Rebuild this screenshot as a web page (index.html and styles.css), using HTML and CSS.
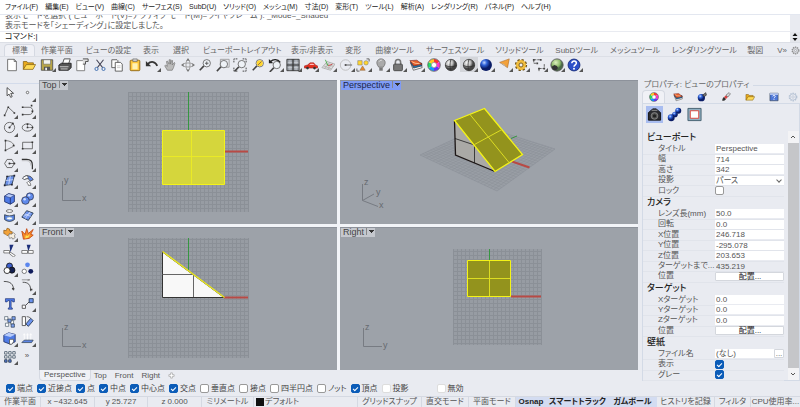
FILE: index.html
```html
<!DOCTYPE html>
<html lang="ja">
<head>
  <meta charset="UTF-8" />
  <title>Rhino</title>
  <link rel="stylesheet" href="styles.css">
</head>
<body>
  <svg class="defs" aria-hidden="true">
    <defs>
      <radialGradient id="blueBall" cx="35%" cy="30%"><stop offset="0" stop-color="#c4d8ff"/><stop offset=".45" stop-color="#2f62d8"/><stop offset="1" stop-color="#0a1c66"/></radialGradient>
      <radialGradient id="grayBall" cx="35%" cy="30%"><stop offset="0" stop-color="#fff"/><stop offset=".6" stop-color="#bbb"/><stop offset="1" stop-color="#444"/></radialGradient>
      <radialGradient id="greenBall" cx="40%" cy="30%"><stop offset="0" stop-color="#dff0c0"/><stop offset=".7" stop-color="#8dba6a"/><stop offset="1" stop-color="#4c6b48"/></radialGradient>
      <pattern id="grid" width="4" height="4" patternUnits="userSpaceOnUse" patternTransform="translate(1 0)"><path d="M0 0H4V4H0z" fill="#979ca3"/><path d="M0 .5H4M.5 0V4" stroke="#8b9097" stroke-width="1" fill="none"/></pattern>
      <symbol id="wheel" viewBox="0 0 16 16">
        <g fill="none" stroke-width="4"><path d="M8 3A5 5 0 0 1 12.3 5.5" stroke="#f33"/><path d="M12.3 5.5A5 5 0 0 1 12.3 10.5" stroke="#f3c"/><path d="M12.3 10.5A5 5 0 0 1 8 13" stroke="#63f"/><path d="M8 13A5 5 0 0 1 3.7 10.5" stroke="#19f"/><path d="M3.7 10.5A5 5 0 0 1 3.7 5.5" stroke="#2d6"/><path d="M3.7 5.5A5 5 0 0 1 8 3" stroke="#fc2"/></g>
        <circle cx="8" cy="8" r="7.2" fill="none" stroke="#444" stroke-width=".8"/><circle cx="8" cy="8" r="3" fill="#fff" stroke="#555" stroke-width=".5"/>
      </symbol>
      <symbol id="layers" viewBox="0 0 16 16">
        <path d="M2 6l3 8 10-3-1-5z" fill="#fff" stroke="#444" stroke-width=".8"/><path d="M1.500 5l4 6.500L14.500 9V6z" fill="#27a" stroke="#223" stroke-width=".7"/><path d="M1 3l4.500 6L15 7 9 2.500z" fill="#e5602c" stroke="#722" stroke-width=".7"/><path d="M3 4l4 2 5 .5" stroke="#ffc9a0" fill="none"/>
      </symbol>
      <symbol id="folder" viewBox="0 0 16 16">
        <path d="M1.500 13V4h4l1 1.500H13V8" fill="#e8a91c" stroke="#7d5a10" stroke-width=".8"/><path d="M1.500 13L5 7.500h10.500L12.500 13z" fill="#ffdb57" stroke="#7d5a10" stroke-width=".8"/>
      </symbol>
      <symbol id="lens" viewBox="0 0 16 16">
        <path d="M6.800 9L2 14" stroke="#444" stroke-width="1.800"/><circle cx="10" cy="6" r="4.200" fill="#eef2f7" stroke="#666"/>
      </symbol>
      <symbol id="gear" viewBox="0 0 16 16">
        <circle cx="8" cy="8" r="6" fill="none" stroke="currentColor" stroke-width="2" stroke-dasharray="2.400 1.400"/><circle cx="8" cy="8" r="4.800" fill="none" stroke="currentColor"/><circle cx="8" cy="8" r="2" fill="none" stroke="currentColor"/>
      </symbol>
    </defs>
  </svg>

  <nav class="menu-bar">
    <button>ファイル(F)</button>
    <button>編集(E)</button>
    <button>ビュー(V)</button>
    <button>曲線(C)</button>
    <button>サーフェス(S)</button>
    <button>SubD(U)</button>
    <button>ソリッド(O)</button>
    <button>メッシュ(M)</button>
    <button>寸法(D)</button>
    <button>変形(T)</button>
    <button>ツール(L)</button>
    <button>解析(A)</button>
    <button>レンダリング(R)</button>
    <button>パネル(P)</button>
    <button>ヘルプ(H)</button>
  </nav>

  <section class="command">
    <div class="history">
      <p>表示モードを選択 ( ビューポート(V)=アクティブ モード(M)=ワイヤフレーム ): _Mode=_Shaded</p>
      <p>表示モードを「シェーディング」に設定しました。</p>
    </div>
    <div class="prompt">
      <label for="cmd">コマンド:</label>
      <input id="cmd" type="text" value="|">
      <button class="spin" aria-label="履歴">
        <svg viewBox="0 0 8 10"><path d="M1.500 4L4 1l2.500 3zM1.500 6L4 9l2.500-3z" fill="#111"/></svg>
      </button>
    </div>
  </section>

  <div class="tab-bar">
    <button class="active">標準</button>
    <button>作業平面</button>
    <button>ビューの設定</button>
    <button>表示</button>
    <button>選択</button>
    <button>ビューポートレイアウト</button>
    <button>表示/非表示</button>
    <button>変形</button>
    <button>曲線ツール</button>
    <button>サーフェスツール</button>
    <button>ソリッドツール</button>
    <button>SubDツール</button>
    <button>メッシュツール</button>
    <button>レンダリングツール</button>
    <button>製図</button>
    <span class="more">V»</span>
    <svg class="tab-gear" viewBox="0 0 16 16"><use href="#gear"/></svg>
  </div>

  <div class="toolbar">
    <button aria-label="新規"><svg viewBox="0 0 16 16"><path d="M3 1.500h7.500L13 4v10.500H3z" fill="#fff" stroke="#666"/><path d="M10.500 1.500V4H13" fill="none" stroke="#666"/></svg></button>
    <button aria-label="開く"><svg viewBox="0 0 16 16"><use href="#folder"/></svg></button>
    <button class="fly" aria-label="保存"><svg viewBox="0 0 16 16"><path d="M1.500 2h13v12h-13z" fill="#b8a548" stroke="#555"/><path d="M4 2h8v5H4z" fill="#f3f3ee" stroke="#666" stroke-width=".6"/><path d="M4.500 10h7v4h-7z" fill="#555"/><path d="M6 11h2v3H6z" fill="#eee"/></svg></button>
    <button aria-label="印刷"><svg viewBox="0 0 16 16"><path d="M5 7l2-6h7l-2 6" fill="#fff" stroke="#444"/><path d="M1 8l3-2h11v5l-3 3H1z" fill="#555" stroke="#222"/><path d="M2 10h10M3 12.500h8" stroke="#ddd"/></svg></button>
    <button aria-label="注釈"><svg viewBox="0 0 16 16"><path d="M2 3h9v11.500H2z" fill="#fff" stroke="#777"/><path d="M9 1h6v3h-3v3H9" fill="#ddd" stroke="#444"/></svg></button>
    <button aria-label="カット"><svg viewBox="0 0 16 16"><path d="M4 2l7 9M12 2L5 11" stroke="#445" stroke-width="1.200"/><circle cx="4" cy="12.500" r="1.800" fill="none" stroke="#36a"/><circle cx="12" cy="12.500" r="1.800" fill="none" stroke="#36a"/></svg></button>
    <button aria-label="コピー"><svg viewBox="0 0 16 16"><path d="M2 2h6l1 1v8H2z" fill="#fff" stroke="#555"/><path d="M6 5h6l2 2v8H6z" fill="#fff" stroke="#555"/><path d="M8 9h4M8 11h4" stroke="#aaa" stroke-width=".7"/></svg></button>
    <button aria-label="貼り付け"><svg viewBox="0 0 16 16"><rect x="2.500" y="2.500" width="11" height="12" rx="1" fill="#ffc83d" stroke="#8a6412"/><path d="M5.500 1h5v3h-5z" fill="#ccc" stroke="#555" stroke-width=".6"/><path d="M5 6h6v7H5z" fill="#fff3b5"/></svg></button>
    <button class="fly" aria-label="元に戻す"><svg viewBox="0 0 16 16"><path d="M3 7c4-4 9-3 11 2" fill="none" stroke="#333" stroke-width="2"/><path d="M1 3.500v6h6z" fill="#333"/></svg></button>
    <button aria-label="パン"><svg viewBox="0 0 16 16"><path d="M5 14L2 9l1-1 2 1.500L4 4l1-.5L7 7V2h1.500v5L10 2.500l1 .5-.5 5L13 5l.5 1L12 11l-1.500 3z" fill="#bbb" stroke="#777" stroke-width=".8"/></svg></button>
    <button aria-label="回転"><svg viewBox="0 0 16 16"><ellipse cx="8" cy="8" rx="6.500" ry="2.300" fill="none" stroke="#999"/><ellipse cx="8" cy="8" rx="2.300" ry="6.500" fill="none" stroke="#999"/><path d="M6 3l2-3 2 3zM6 13l2 3 2-3zM3 6L0 8l3 2zM13 6l3 2-3 2z" fill="#777"/></svg></button>
    <button aria-label="ズーム"><svg viewBox="0 0 16 16"><use href="#lens"/><path d="M8 6h4M10 4v4" stroke="#555"/></svg></button>
    <button aria-label="窓ズーム"><svg viewBox="0 0 16 16"><path d="M5 1.500h10v9H5z" fill="none" stroke="#999"/><use href="#lens" y="1" x="-1"/></svg></button>
    <button aria-label="全体ズーム"><svg viewBox="0 0 16 16"><use href="#lens" y="1"/><path d="M1 5V1h4M11 1h4v4M15 11v4h-4M5 15H1v-4" fill="none" stroke="#333" stroke-dasharray="2 1"/></svg></button>
    <button aria-label="選択ズーム"><svg viewBox="0 0 16 16"><use href="#lens"/><circle cx="10" cy="6" r="3.500" fill="#ffd52e"/><path d="M8 8l4-4" stroke="#864"/></svg></button>
    <button class="fly" aria-label="ズームを戻す"><svg viewBox="0 0 16 16"><use href="#lens" y="2"/><path d="M3 4c3-3 8-3 11 1" fill="none" stroke="#222" stroke-width="1.600"/><path d="M1 1v5h5z" fill="#222"/></svg></button>
    <button class="fly" aria-label="4ビュー"><svg viewBox="0 0 16 16"><path d="M1 1.500h14v13H1z" fill="#9aa0a8" stroke="#333"/><path d="M8 1.500v13M1 8h14" stroke="#333" stroke-width="1.400"/><path d="M4.500 2v5M2 5h5M11.500 2v5M9 5h5M4.500 9v5M2 11h5M11.500 9v5M9 11h5" stroke="#d9dde2" stroke-width=".7"/></svg></button>
    <button class="fly" aria-label="車"><svg viewBox="0 0 16 16"><path d="M.5 9l3.500-1 3-2.500h4L13 8l2.500 1v2.500H.5z" fill="#e2301f" stroke="#911" stroke-width=".6"/><path d="M6 8l1.500-1.500h3L12 8z" fill="#fbb"/><circle cx="4" cy="11.500" r="1.500" fill="#333"/><circle cx="12" cy="11.500" r="1.500" fill="#333"/></svg></button>
    <button class="fly" aria-label="作業平面"><svg viewBox="0 0 16 16"><path d="M1 11L7 4l9 3-5 7z" fill="#ddd" stroke="#999" stroke-width=".7"/><path d="M3 9l9 3.500M5 6.500l9 3M4 12l6-7M7.500 13l6-7" stroke="#999" stroke-width=".6"/><path d="M8 9L5 2" stroke="#4a4"/><path d="M8 9l5-2" stroke="#c44"/></svg></button>
    <button class="fly" aria-label="回転視点"><svg viewBox="0 0 16 16"><circle cx="7.500" cy="8" r="6" fill="none" stroke="#bbb"/><path d="M7 8h8" stroke="#555"/><circle cx="7.500" cy="8" r="1.200" fill="#555"/></svg></button>
    <button class="fly" aria-label="オブジェクト選択"><svg viewBox="0 0 16 16"><path d="M2 3h5v5H2z" fill="#ffd52e" stroke="#777" stroke-width=".6"/><circle cx="11.500" cy="5.500" r="2.500" fill="#ffd52e" stroke="#777" stroke-width=".6"/><path d="M7.500 9l3 5h-6z" fill="#e88a2b" stroke="#864" stroke-width=".6"/><path d="M12 1h3v3M1 12v3h3" fill="none" stroke="#555"/></svg></button>
    <button class="fly" aria-label="電球"><svg viewBox="0 0 16 16"><path d="M5.500 10.500C1 5 4 1 8 1s7 4 2.500 9.500z" fill="#aaa" stroke="#777"/><path d="M6 11h4v3.500H6z" fill="#777"/><path d="M6 4c1-1.500 2-1.500 3-1.500" stroke="#eee" fill="none"/></svg></button>
    <button class="fly" aria-label="ロック"><svg viewBox="0 0 16 16"><path d="M5 8V5c0-4.500 6-4.500 6 0v3" fill="none" stroke="#777" stroke-width="1.800"/><rect x="3" y="7" width="10" height="7.500" rx="1" fill="#777" stroke="#444"/></svg></button>
    <button class="fly" aria-label="レイヤ"><svg viewBox="0 0 16 16"><use href="#layers"/></svg></button>
    <button aria-label="プロパティ"><svg viewBox="0 0 16 16"><use href="#wheel"/></svg></button>
    <button aria-label="シェーディング"><svg viewBox="0 0 16 16"><circle cx="8" cy="8" r="6.500" fill="url(#grayBall)" stroke="#333" stroke-width=".8"/><path d="M1.500 8.500c4 2 9 2 13 0M8 1.500c-1.500 4-1.500 9 0 13" fill="none" stroke="#333" stroke-width=".9"/></svg></button>
    <button class="fly pressed" aria-label="シェーディング表示"><svg viewBox="0 0 16 16"><circle cx="8" cy="8" r="6.500" fill="url(#grayBall)" stroke="#333" stroke-width=".8"/><path d="M1.500 8.500c4 2 9 2 13 0M8 1.500c-1.500 4-1.500 9 0 13" fill="none" stroke="#333" stroke-width=".9"/></svg></button>
    <button class="fly" aria-label="レンダリング"><svg viewBox="0 0 16 16"><circle cx="8" cy="8" r="6.800" fill="url(#blueBall)"/></svg></button>
    <button class="fly" aria-label="ライト"><svg viewBox="0 0 16 16"><path d="M3 5l11-4-2 10z" fill="#f3a13a" stroke="#a55c12" stroke-width=".6"/><path d="M3 5l5 2 4 4z" fill="#b7b7b7"/></svg></button>
    <button class="fly" aria-label="オプション"><svg viewBox="0 0 16 16"><circle cx="8" cy="8" r="5.500" fill="#f0bd3f" stroke="#6f5316" stroke-width="3" stroke-dasharray="2.400 1.900"/><circle cx="8" cy="8" r="5.200" fill="#f0bd3f" stroke="#f0bd3f"/><circle cx="8" cy="8" r="2.300" fill="#eee" stroke="#6f5316"/></svg></button>
    <button class="fly" aria-label="寸法"><svg viewBox="0 0 16 16"><path d="M2 2h8M2 2v4h4M8 12h6V6M8 12v3" fill="none" stroke="#555" stroke-dasharray="3 1"/><path d="M1 1h2v2H1zM9 1h2v2H9zM5 5h2v2H5zM7 11h2v2H7zM13 11h2v2h-2z" fill="#444"/></svg></button>
    <button class="fly" aria-label="Grasshopper"><svg viewBox="0 0 16 16"><circle cx="8" cy="8" r="7" fill="url(#greenBall)" stroke="#555"/><path d="M2 10l3-2 3 1 1 2-1 2-2 1-3-1z" fill="#333"/></svg></button>
    <button class="fly" aria-label="ヘルプ"><svg viewBox="0 0 16 16"><circle cx="8" cy="8" r="6.800" fill="#2c50c8" stroke="#162a77"/><path d="M5.500 6c0-3.500 5.500-3.300 5.200 0C10.500 7.800 8 7.800 8 10" fill="none" stroke="#fff" stroke-width="1.800"/><circle cx="8" cy="12.300" r="1.100" fill="#fff"/></svg></button>
  </div>

  <main>
    <aside class="tools">
      <button aria-label="選択"><svg viewBox="0 0 16 16"><path d="M5 2v10l2.500-2 2 4 1.800-1L9.500 9h3.500z" fill="#fff" stroke="#333"/></svg></button>
      <button class="fly" aria-label="点"><svg viewBox="0 0 16 16"><circle cx="8" cy="8" r="1.500" fill="#fff" stroke="#555"/></svg></button>
      <button class="fly" aria-label="ポリライン"><svg viewBox="0 0 16 16"><path d="M2 14L6.500 4 14 11" fill="none" stroke="#555"/><path d="M1 13h2v2H1zM5.500 3h2v2h-2zM13 10h2v2h-2z" fill="#333"/></svg></button>
      <button class="fly" aria-label="曲線"><svg viewBox="0 0 16 16"><path d="M2 4h8c6 0 6 9 0 9H2" fill="none" stroke="#555"/><path d="M1 3h2v2H1zM12 1h2v2h-2zM13 8h2v2h-2zM1 12h2v2H1z" fill="#333"/></svg></button>
      <button class="fly" aria-label="円"><svg viewBox="0 0 16 16"><circle cx="8" cy="8" r="6.300" fill="none" stroke="#555"/><path d="M8 8l4-5" stroke="#555"/><circle cx="8" cy="8" r="1.300" fill="#333"/><circle cx="12" cy="3" r="1.300" fill="#333"/></svg></button>
      <button class="fly" aria-label="楕円"><svg viewBox="0 0 16 16"><ellipse cx="8" cy="8" rx="6.500" ry="4.500" fill="none" stroke="#555"/><path d="M8 8h6M8 8V3" stroke="#888"/><path d="M7 7h2v2H7zM7 3h2v2H7zM13 7h2v2h-2z" fill="#333"/></svg></button>
      <button class="fly" aria-label="円弧"><svg viewBox="0 0 16 16"><path d="M3 2c6 0 10 3 11 7M3 2v12l10-5" fill="none" stroke="#666"/><path d="M2 1h2v2H2zM2 13h2v2H2zM12 7h2v2h-2z" fill="#333"/></svg></button>
      <button class="fly" aria-label="長方形"><svg viewBox="0 0 16 16"><path d="M2 4h12v8H2z" fill="none" stroke="#555"/><path d="M1 11h2v2H1zM13 3h2v2h-2z" fill="#333"/></svg></button>
      <button class="fly" aria-label="多角形"><svg viewBox="0 0 16 16"><path d="M5 3h6l3 5-3 5H5L2 8z" fill="none" stroke="#555"/><path d="M8 8h6" stroke="#555"/><circle cx="8" cy="8" r="1.300" fill="#333"/><circle cx="14" cy="8" r="1.200" fill="#333"/></svg></button>
      <button class="fly" aria-label="フィレット"><svg viewBox="0 0 16 16"><path d="M1 3h6c5 0 7 3 7 7v5" fill="none" stroke="#333" stroke-width="1.500"/><path d="M1 4.500h5c5 0 6 3 6 6" fill="none" stroke="#999" stroke-width=".7"/></svg></button>
      <button class="fly" aria-label="サーフェス"><svg viewBox="0 0 16 16"><path d="M5 3l9-1-3 11-9 1z" fill="#6e93ea" stroke="#234"/><path d="M9 2.500L7 13M3.500 8l9-1" stroke="#d5e1ff"/><path d="M4 2h2v2H4zM13 1h2v2h-2zM10 12h2v2h-2zM1 13h2v2H1z" fill="#223"/></svg></button>
      <button class="fly" aria-label="回転体"><svg viewBox="0 0 16 16"><path d="M2 5C6 0 13 2 15 7l-4 2C10 5 7 5 4 7z" fill="#5c85e6" stroke="#444"/><path d="M2 5C4 3 6 2 8 2l1 3.500C7 5.500 5 6 4 7z" fill="#fff" stroke="#444" stroke-width=".8"/><path d="M9 9c2 1 3 3 3 5h-3c0-2-1-2-2-3z" fill="#fff" stroke="#444" stroke-width=".8"/></svg></button>
      <button class="fly" aria-label="ボックス"><svg viewBox="0 0 16 16"><path d="M2 5l5-3 7 2v8l-5 3-7-3z" fill="#4f7be6" stroke="#1a2c66"/><path d="M2 5l7 2 5-3-7-2z" fill="#b7cbfa" stroke="#1a2c66" stroke-width=".6"/><path d="M9 7v8" stroke="#1a2c66"/></svg></button>
      <button class="fly" aria-label="球"><svg viewBox="0 0 16 16"><circle cx="11" cy="5.500" r="4.500" fill="#5f8aec" stroke="#223" stroke-width=".8"/><circle cx="5.500" cy="10.500" r="4.700" fill="#5f8aec" stroke="#223" stroke-width=".8"/><circle cx="10" cy="4" r="1.500" fill="#cddcff"/><circle cx="4.500" cy="9" r="1.500" fill="#cddcff"/></svg></button>
      <button class="fly" aria-label="投影"><svg viewBox="0 0 16 16"><ellipse cx="8" cy="2.500" rx="4" ry="1.700" fill="#fff" stroke="#555"/><path d="M2 7c4 2 8 2 12 0v6c-4 3-8 3-12 0z" fill="#5c85e6" stroke="#234"/><ellipse cx="8" cy="11.500" rx="3.500" ry="1.800" fill="#fff" stroke="#8ac"/></svg></button>
      <button class="fly" aria-label="メッシュ"><svg viewBox="0 0 16 16"><path d="M1 10l6-8 8 3-6 9z" fill="#6e93ea" stroke="#234"/><path d="M4 6l8 3M11 3.500L5 12M3 9l9-4" stroke="#e0e9ff" stroke-width=".8"/></svg></button>
      <button class="fly" aria-label="結合"><svg viewBox="0 0 16 16"><path d="M1 4l3 .500L5 1.500l3 1 .500 2.500 3 1-1 3-3 0-2 2-2-2L1 8z" fill="#f2a33a" stroke="#85520d" stroke-width=".8"/><path d="M8 8l2 1 3-2 2 2-1 2 1 2-3 2-1-2-3 1-1-3z" fill="#f7efe0" stroke="#666" stroke-width=".8"/></svg></button>
      <button aria-label="分解"><svg viewBox="0 0 16 16"><path d="M3 15L1 5l4 4 2-7 2 6 6-5-3 6 3 1-5 4z" fill="#f7912b" stroke="#c4420d"/><path d="M5 14l1-4 2 1 3-2-2 4z" fill="#ffe14d"/></svg></button>
      <button aria-label="トリム"><svg viewBox="0 0 16 16"><path d="M8 1h5l-4 9z" fill="#1c2f7a"/><path d="M1 8h7v3H1zM9 10l6 4-2 2-5-4z" fill="#fff" stroke="#444" stroke-width=".8"/></svg></button>
      <button aria-label="分割"><svg viewBox="0 0 16 16"><path d="M7 1h5l-3 8z" fill="#1c2f7a"/><path d="M1 8h7v3.500H1zM9 8h6v3.500H9z" fill="#fff" stroke="#444" stroke-width=".8"/></svg></button>
      <button class="fly" aria-label="ブール和"><svg viewBox="0 0 16 16"><circle cx="8" cy="5" r="3.700" fill="#3e62cf" stroke="#111"/><circle cx="11" cy="10" r="3.700" fill="#142050" stroke="#111"/><circle cx="5" cy="10.500" r="3.700" fill="#fff" stroke="#111"/></svg></button>
      <button aria-label="グループ"><svg viewBox="0 0 16 16"><circle cx="8" cy="3.500" r="2.900" fill="#5b86ee"/><circle cx="4" cy="11.500" r="2.700" fill="#fff" stroke="#444" stroke-width=".8"/><circle cx="12" cy="11.500" r="3" fill="#101c5c"/></svg></button>
      <button aria-label="ブレンド"><svg viewBox="0 0 16 16"><path d="M1 3c8 0 12 3 12 11" fill="none" stroke="#333"/><path d="M11 11h3v2h-3z" fill="#444"/></svg></button>
      <button class="fly" aria-label="調整"><svg viewBox="0 0 16 16"><path d="M2 4c7 0 10 3 10 11" fill="none" stroke="#333"/><path d="M1 1h9M8 0l3 1-3 1" stroke="#888" fill="none"/><path d="M11 12h3v2h-3z" fill="#444"/></svg></button>
      <button aria-label="テキスト"><svg viewBox="0 0 16 16"><path d="M3 2h11v4h-2l-.500-1.500H10V13l1.500.5V15h-5v-1.500L8 13V4.500H6L5 6H3z" fill="#4d7ae6" stroke="#1d2f6e" stroke-width=".8"/></svg></button>
      <button class="fly" aria-label="移動"><svg viewBox="0 0 16 16"><path d="M10 2h5v5h-5z" fill="#6b92ee" stroke="#234"/><path d="M1.500 10h4v4h-4z" fill="#fff" stroke="#444"/><path d="M6 10l4-4" stroke="#333"/></svg></button>
      <button aria-label="コピー"><svg viewBox="0 0 16 16"><path d="M2 2h4v4H2zM9 7h4v4H9zM3 10h4v4H3z" fill="#fff" stroke="#456" stroke-width=".8"/><path d="M11 2h4v4h-4zM6 5h4v4H6zM10 11h4v4h-4z" fill="#7ea0ee" stroke="#234" stroke-width=".8"/></svg></button>
      <button aria-label="回転"><svg viewBox="0 0 16 16"><path d="M1.500 2h4v11h-4z" fill="#fff" stroke="#444"/><path d="M12 4l3 3-6 7-3-3z" fill="#6b92ee" stroke="#234"/><path d="M7 2c2 0 4 1 5 2" fill="none" stroke="#555"/></svg></button>
      <button class="fly" aria-label="ソリッド編集"><svg viewBox="0 0 16 16"><path d="M1 4l6-3 8 2v9l-6 3-8-3z" fill="#4f7be6" stroke="#1a2c66"/><path d="M1 4l8 2 6-3-8-2z" fill="#b7cbfa"/><path d="M8 9h5v3l-2 3H8z" fill="#fff" stroke="#555"/></svg></button>
      <button class="fly" aria-label="解析"><svg viewBox="0 0 16 16"><path d="M1 13l3-3h11l-2 3z" fill="#5c85e6" stroke="#234" stroke-width=".8"/><path d="M4 9V3M8 9V3M12 9V3M3 4l1-2 1 2M7 4l1-2 1 2M11 4l1-2 1 2" stroke="#fff" fill="none"/></svg></button>
      <button class="fly" aria-label="配列"><svg viewBox="0 0 16 16"><path d="M2 2h3v3H2zM7 2h3v3H7zM12 2h3v3h-3zM2 7h3v3H2zM7 7h3v3H7zM12 7h3v3h-3z" fill="#fff" stroke="#456"/><path d="M2 12h3v3H2zM7 12h3v3H7z" fill="#5c85e6" stroke="#234"/></svg></button>
      <button aria-label="その他">»</button>
    </aside>

    <section class="work">
      <div class="viewports">
        <div class="viewport">
          <svg class="scene" viewBox="0 0 298 143" preserveAspectRatio="xMinYMin meet">
            <rect x="89" y="12" width="121" height="120" fill="url(#grid)"/>
            <path class="axis-y" d="M149.500 12V50"/>
            <path class="axis-x" d="M185 71.500H209"/>
            <path d="M123.500 50.500h62v54h-62z" fill="#d5d63c" stroke="#f3f31a"/>
            <path d="M152.500 51V104M124 76.500H185" stroke="#eaea26"/>
            <path class="gizmo" d="M23.500 101V120.500H42"/>
            <text x="25" y="103">y</text><text x="43" y="121">x</text>
          </svg>
          <button class="view-title">Top<i></i></button>
        </div>
        <div class="viewport">
          <svg class="scene" viewBox="0 0 298 143" preserveAspectRatio="xMinYMin meet">
            <path d="M80 75L157 111 215 69 142 46z" fill="#999ea5" stroke="#8c9198" stroke-width=".6"/>
            <g id="planeGrid" stroke="#898e95" stroke-width=".4"></g>
            <path class="axis-y" d="M171 58.500L177 56"/>
            <path class="axis-x" d="M172 81.500L189.500 87.500"/>
            <path d="M114.500 40.500L115.500 75 155 91.500z" fill="#aaa9a6"/>
            <path d="M115 58.500L134.500 65V83" fill="none" stroke="#3c3c3c"/>
            <path d="M114.500 41L115.500 75 155 91.500" fill="none" stroke="#1d1717" stroke-width="1.300"/>
            <path d="M114.500 40.500L144.500 28.500 182.500 74.500 155 91.500z" fill="#93931d" stroke="#f4f417" stroke-width="1.300"/>
            <path d="M130 34.500L169 82.500M134.500 64.500L162 49.500" stroke="#dddd22"/>
            <path class="gizmo" d="M22.500 104V120.500L34 114M22.500 120.500L38 126.500"/>
            <text x="24" y="105">z</text><text x="36" y="115">y</text><text x="39" y="128">x</text>
          </svg>
          <button class="view-title current">Perspective<i></i></button>
        </div>
        <div class="viewport">
          <svg class="scene" viewBox="0 0 298 143" preserveAspectRatio="xMinYMin meet">
            <rect x="89" y="11" width="121" height="120" fill="url(#grid)"/>
            <path class="axis-y" d="M149.500 11V45"/>
            <path class="axis-x" d="M185 70.500H209"/>
            <path d="M123.500 25V70.500H185z" fill="#f8f8f8" stroke="#333"/>
            <path d="M123.500 47.500H154.500V70" fill="none" stroke="#666"/>
            <path d="M123.500 24.500L185.500 70.500" stroke="#e9e620" stroke-width="1.500"/>
            <path class="gizmo" d="M23.500 101V119.500H42"/>
            <text x="25" y="103">z</text><text x="43" y="121">x</text>
          </svg>
          <button class="view-title">Front<i></i></button>
        </div>
        <div class="viewport">
          <svg class="scene" viewBox="0 0 298 143" preserveAspectRatio="xMinYMin meet">
            <rect x="113" y="22" width="89" height="96" fill="url(#grid)"/>
            <path class="axis-y" d="M149.500 22V33"/>
            <path class="axis-x" d="M171 69.500H201"/>
            <path d="M127.500 33.500h43v36h-43z" fill="#93931d" stroke="#f4f417"/>
            <path d="M149.500 34V69M128 51.500H170" stroke="#dddd22"/>
            <path class="gizmo" d="M23.500 101V119.500H42"/>
            <text x="25" y="103">z</text><text x="43" y="121">y</text>
          </svg>
          <button class="view-title">Right<i></i></button>
        </div>
      </div>
      <div class="view-tabs">
        <button class="active">Perspective</button>
        <button>Top</button>
        <button>Front</button>
        <button>Right</button>
        <button aria-label="追加"><svg viewBox="0 0 8 8"><path d="M3 1h2v2h2v2H5v2H3V5H1V3h2z" fill="#fff" stroke="#999" stroke-width=".7"/></svg></button>
      </div>
    </section>

    <aside class="panel">
      <h1>プロパティ: ビューのプロパティ</h1>
      <div class="panel-tabs">
        <button class="active" aria-label="プロパティ"><svg viewBox="0 0 16 16"><use href="#wheel"/></svg></button>
        <button aria-label="レイヤ"><svg viewBox="0 0 16 16"><use href="#layers"/></svg></button>
        <button aria-label="レンダリング"><svg viewBox="0 0 16 16"><circle cx="7" cy="9" r="5.800" fill="url(#blueBall)"/><path d="M9 5l5-4 1 4-3 2z" fill="#777" stroke="#222"/></svg></button>
        <button aria-label="マテリアル"><svg viewBox="0 0 16 16"><path d="M2 14c0-3 1-5 3-6l3 3c-1 2-3 3-6 3z" fill="#333"/><path d="M5 8l3 3 3-3-3-3z" fill="#d44"/><path d="M8 5l5-4 2 2-4 5z" fill="#ddd" stroke="#555"/></svg></button>
        <button aria-label="ライブラリ"><svg viewBox="0 0 16 16"><use href="#folder"/></svg></button>
        <button aria-label="ヘルプ"><svg viewBox="0 0 16 16"><path d="M1.500 2h13v12h-13z" fill="#4f78d8" stroke="#345"/><path d="M1.500 2h13v2.500h-13z" fill="#c8d6f5"/><path d="M6 7c0-2 4-2 4 0 0 1.500-2 1.500-2 3M8 11v1.500" stroke="#fff" stroke-width="1.400" fill="none"/></svg></button>
        <button class="faded" aria-label="設定"><svg viewBox="0 0 16 16"><use href="#gear"/></svg></button>
      </div>
      <div class="panel-body">
        <div class="modes">
          <button class="active" aria-label="カメラ"><svg viewBox="0 0 16 16"><path d="M1.500 6L4 4l2-2h4l2 2 2.500 2v8h-13z" fill="#2b2b30" stroke="#111"/><circle cx="8" cy="9.500" r="3.600" fill="#555" stroke="#999" stroke-width=".7"/><circle cx="8" cy="9.500" r="1.800" fill="#222"/><path d="M5 3.500h6" stroke="#999"/></svg></button>
          <button aria-label="オブジェクト"><svg viewBox="0 0 16 16"><circle cx="12" cy="4" r="3.200" fill="url(#blueBall)"/><circle cx="8.500" cy="8" r="3" fill="url(#blueBall)"/><circle cx="4.500" cy="11.500" r="3.700" fill="url(#blueBall)"/></svg></button>
          <button aria-label="枠"><svg viewBox="0 0 16 16"><path d="M1 1.500h14v13H1z" fill="#8fb0c3" stroke="#45606f"/><path d="M3.500 4h9v8h-9z" fill="#fff" stroke="#e0443a"/></svg></button>
        </div>
        <form class="props">
          <h2>ビューポート</h2>
          <div class="row"><label for="p1">タイトル</label><input id="p1" value="Perspective"></div>
          <div class="row"><label for="p2">幅</label><input id="p2" value="714"></div>
          <div class="row"><label for="p3">高さ</label><input id="p3" value="342"></div>
          <div class="row"><label for="p4">投影</label><span class="pick"><select id="p4"><option>パース</option></select></span></div>
          <div class="row"><label for="p5">ロック</label><input id="p5" type="checkbox"></div>
          <h2>カメラ</h2>
          <div class="row"><label for="p6">レンズ長(mm)</label><input id="p6" value="50.0"></div>
          <div class="row"><label for="p7">回転</label><input id="p7" value="0.0"></div>
          <div class="row"><label for="p8">X位置</label><input id="p8" value="246.718"></div>
          <div class="row"><label for="p9">Y位置</label><input id="p9" value="-295.078"></div>
          <div class="row"><label for="p10">Z位置</label><input id="p10" value="203.653"></div>
          <div class="row"><label for="p11">ターゲットまで...</label><input id="p11" class="plain" value="435.219" readonly></div>
          <div class="row"><label for="p12">位置</label><button id="p12" type="button">配置...</button></div>
          <h2>ターゲット</h2>
          <div class="row"><label for="p13">Xターゲット</label><input id="p13" value="0.0"></div>
          <div class="row"><label for="p14">Yターゲット</label><input id="p14" value="0.0"></div>
          <div class="row"><label for="p15">Zターゲット</label><input id="p15" value="0.0"></div>
          <div class="row"><label for="p16">位置</label><button id="p16" type="button">配置...</button></div>
          <h2>壁紙</h2>
          <div class="row"><label for="p17">ファイル名</label><input id="p17" value="(なし)"><button class="browse" type="button">...</button></div>
          <div class="row"><label for="p18">表示</label><input id="p18" type="checkbox" checked></div>
          <div class="row"><label for="p19">グレー</label><input id="p19" type="checkbox" checked></div>
        </form>
        <div class="scroll">
          <svg viewBox="0 0 10 10"><path d="M3 6l2-2 2 2" fill="none" stroke="#555"/></svg>
          <span></span>
          <svg viewBox="0 0 10 10"><path d="M3 4l2 2 2-2" fill="none" stroke="#555"/></svg>
        </div>
      </div>
    </aside>
  </main>

  <div class="osnap">
    <label><input type="checkbox" checked>端点</label>
    <label><input type="checkbox" checked>近接点</label>
    <label><input type="checkbox" checked>点</label>
    <label><input type="checkbox" checked>中点</label>
    <label><input type="checkbox" checked>中心点</label>
    <label><input type="checkbox" checked>交点</label>
    <label><input type="checkbox">垂直点</label>
    <label><input type="checkbox">接点</label>
    <label><input type="checkbox">四半円点</label>
    <label><input type="checkbox">ノット</label>
    <label><input type="checkbox" checked>頂点</label>
    <label class="light"><input type="checkbox">投影</label>
    <label class="light last"><input type="checkbox">無効</label>
  </div>

  <footer class="status">
    <button>作業平面</button>
    <span>x −432.645</span>
    <span>y 25.727</span>
    <span>z 0.000</span>
    <button>ミリメートル</button>
    <button class="layer"><i></i>デフォルト</button>
    <button>グリッドスナップ</button>
    <button>直交モード</button>
    <button>平面モード</button>
    <button class="on">Osnap</button>
    <button class="on">スマートトラック</button>
    <button class="on">ガムボール</button>
    <button>ヒストリを記録</button>
    <button>フィルタ</button>
    <span>CPU使用率...</span>
  </footer>

  <script>
    // grid lines of the construction plane in the perspective view
    const plane = [[80, 75], [157, 111], [215, 69], [142, 46]];
    const steps = 24;
    const mix = (a, b, t) => [a[0] + (b[0] - a[0]) * t, a[1] + (b[1] - a[1]) * t];
    let lines = '';

    for (let i = 1; i < steps; i++) {
      const t = i / steps;
      const pairs = [
        [mix(plane[0], plane[1], t), mix(plane[3], plane[2], t)],
        [mix(plane[0], plane[3], t), mix(plane[1], plane[2], t)]
      ];
      pairs.forEach(([a, b]) => {
        lines += `<path d="M${a[0]} ${a[1]}L${b[0]} ${b[1]}"/>`;
      });
    }
    document.getElementById('planeGrid').innerHTML = lines;
  </script>
</body>
</html>
```
FILE: styles.css
```css
* {
  box-sizing: border-box;
}

body {
  margin: 0;
  min-height: 100vh;
  display: flex;
  flex-direction: column;
  background: #e9ebf1;
  color: #555;
  font: 8px/10px "Liberation Sans", "Noto Sans CJK JP", sans-serif;
  font-feature-settings: "palt";
  white-space: nowrap;
}

button, input, select {
  font: inherit;
  font-feature-settings: inherit;
  color: inherit;
  margin: 0;
  padding: 0;
  border: none;
  background: none;
  min-width: 0;
}

h1, h2, p {
  margin: 0;
  font-size: 8px;
  font-weight: normal;
}

svg {
  display: block;
}

.defs {
  position: absolute;
  width: 0;
  height: 0;
}

/* menu */
.menu-bar {
  display: flex;
  gap: 7px;
  height: 15px;
  padding: 0 5px;
  background: #fff;
  border-bottom: 1px solid #e3e7f0;
  color: #222;
  font-size: 7px;
}

/* command line */
.command {
  border-bottom: 1px solid #dcdfe6;
  color: #555;
}

.history {
  height: 16px;
  margin-right: 10px;
  padding-left: 5px;
  background: #fff;
  overflow: hidden;
  display: flex;
  flex-direction: column;
  justify-content: flex-end;
}

.prompt {
  display: flex;
  align-items: center;
  height: 10px;
  margin-top: 1px;
  padding-left: 5px;
  background: #fff;
  color: #111;
}

.prompt input {
  flex: 1;
}

.spin {
  width: 10px;
  height: 10px;
  background: #e4e6eb;
}

.spin svg {
  width: 8px;
  height: 10px;
  margin: 0 auto;
}

/* toolbar tabs */
.tab-bar {
  display: flex;
  gap: 15px;
  height: 13px;
  margin-top: 1px;
  padding-left: 4px;
  border-bottom: 1px solid #dcdfe6;
  color: #666;
}

.tab-bar .active {
  margin-right: -9px;
  padding: 0 7px;
  border: 1px solid #d5d9e2;
  border-bottom: none;
  border-radius: 4px 4px 0 0;
  background: #f0f1f6;
}

.tab-bar button:nth-child(n+2), .more {
  line-height: 13px;
}

.tab-gear {
  flex: none;
  width: 9px;
  height: 9px;
  margin: 2px 0 0 -11px;
  color: #888;
}

.toolbar {
  display: grid;
  grid-template-columns: repeat(33, 1fr);
  width: 580px;
  height: 15px;
  margin-left: 3px;
}

.toolbar button, .tools button {
  display: flex;
  align-items: center;
  justify-content: center;
  position: relative;
}

.toolbar svg, .tools svg {
  width: 14px;
  height: 14px;
}

.fly::after {
  content: "";
  position: absolute;
  right: 0;
  bottom: 0;
  border-left: 4px solid transparent;
  border-bottom: 4px solid #555;
}

.pressed {
  background: #d3d5da;
}

/* main area */
main {
  flex: 1;
  display: flex;
  padding-top: 8px;
}

.tools {
  display: grid;
  grid-template-columns: 18px 18px;
  grid-template-rows: repeat(16, 1fr);
  width: 39px;
  margin: 3px 0 16px;
  border-top: 1px solid #d3dbea;
}

.tools svg {
  width: 13px;
  height: 13px;
}

.work {
  flex: 1;
  display: flex;
  flex-direction: column;
}

.viewports {
  flex: 1;
  display: grid;
  grid-template-columns: 1fr 1fr;
  grid-template-rows: 1fr 1fr;
  gap: 3px;
  background: #f2f4f8;
}

.viewport {
  position: relative;
  background: #9da2a9;
  border-top: 1px solid #8d929b;
}

.scene {
  position: absolute;
  top: -1px;
  left: 0;
  width: 100%;
  height: calc(100% + 1px);
}

.scene text {
  font-size: 9px;
  fill: #666a70;
}

.axis-x, .axis-y, .gizmo {
  fill: none;
  stroke: #777b82;
}

.axis-x {
  stroke: #b84a45;
  stroke-width: 2px;
}

.axis-y {
  stroke: #369641;
}

.view-title {
  position: absolute;
  top: 0;
  left: 1px;
  height: 9px;
  padding-left: 2px;
  background: #c5c8ce;
  color: #444;
  font-size: 9px;
  line-height: 9px;
}

.view-title i {
  display: inline-block;
  width: 9px;
  height: 7px;
  margin-left: 2px;
  border-left: 1px solid #888;
  background: linear-gradient(#333, #333) 2px 2px / 5px 1px no-repeat, linear-gradient(#333, #333) 3px 3px / 3px 1px no-repeat, linear-gradient(#333, #333) 4px 4px / 1px 1px no-repeat;
}

.view-title.current {
  background: #809cf5;
  color: #1c2648;
}

.view-tabs {
  display: flex;
  gap: 8px;
  height: 11px;
  color: #555;
}

.view-tabs .active {
  padding: 0 4px;
  margin-right: -5px;
  border: 1px solid #d5d9e2;
  border-top: none;
  border-radius: 0 0 4px 4px;
  background: #f0f1f6;
}

.view-tabs svg {
  width: 7px;
  height: 7px;
}

/* properties panel */
.panel {
  flex: none;
  display: flex;
  flex-direction: column;
  width: 162px;
  padding-left: 4px;
}

.panel h1 {
  display: flex;
  align-items: center;
  gap: 4px;
  padding-left: 2px;
  color: #666;
}

.panel h1::after {
  content: "";
  flex: 1;
  border-top: 1px solid #d3dae6;
}

.panel-tabs {
  display: grid;
  grid-template-columns: repeat(6, 24px) 14px;
  height: 13px;
}

.panel-tabs button {
  display: flex;
  align-items: center;
  justify-content: center;
}

.panel-tabs .active {
  margin-right: 1px;
  border: 1px solid #d5d9e2;
  border-bottom: none;
  border-radius: 4px 4px 0 0;
  background: #f0f1f6;
}

.panel-tabs svg {
  width: 10px;
  height: 10px;
}

.faded {
  color: #b3c0d2;
}

.panel-body {
  flex: 1;
  display: grid;
  grid-template-columns: minmax(0, 1fr) 11px;
  grid-template-rows: 27px 1fr;
  border: 1px solid #d3dae6;
}

.modes {
  grid-column: 1 / 3;
  display: flex;
  gap: 3px;
  padding: 2px 3px;
}

.modes button {
  width: 17px;
  height: 17px;
  padding: 1px;
}

.modes .active {
  background: #a9bdf0;
}

.props {
  display: flex;
  flex-direction: column;
  padding-right: 4px;
}

.props h2 {
  flex: 12;
  display: flex;
  align-items: center;
  padding-left: 4px;
  color: #222;
  font-size: 9px;
  font-weight: 500;
}

.row {
  flex: 10;
  display: flex;
  align-items: center;
  padding-left: 15px;
  box-shadow: 0 1px #e1e4eb;
}

.row label {
  flex: none;
  width: 57px;
}

.row input:not([type="checkbox"]), .pick, .row button {
  flex: 1;
  height: 9px;
  padding-left: 1px;
  background: #fff;
  line-height: 9px;
}

.row .plain:not([type="checkbox"]) {
  background: none;
}

.pick {
  display: flex;
  position: relative;
}

.pick select {
  flex: 1;
  appearance: none;
  line-height: 9px;
}

.pick::after {
  content: "";
  position: absolute;
  right: 3px;
  top: 2px;
  width: 3px;
  height: 3px;
  border: solid #666;
  border-width: 0 1px 1px 0;
  transform: rotate(45deg);
}

.row button {
  border: 1px solid #d4d7dd;
  border-radius: 1px;
  color: #222;
  line-height: 7px;
}

.row .browse {
  flex: none;
  width: 10px;
  padding: 0;
  color: #666;
}

input[type="checkbox"] {
  appearance: none;
  flex: none;
  width: 9px;
  height: 9px;
  border: 1px solid #999;
  border-radius: 2px;
  background: #fff;
  position: relative;
}

input[type="checkbox"]:checked {
  background: #0b5cb8;
  border-color: #0b5cb8;
}

input[type="checkbox"]:checked::after {
  content: "";
  position: absolute;
  left: 2px;
  top: 1px;
  width: 2px;
  height: 4px;
  border: solid #fff;
  border-width: 0 1px 1px 0;
  transform: rotate(45deg);
}

.scroll {
  display: flex;
  flex-direction: column;
  background: #f3f3f5;
}

.scroll span {
  flex: 1;
  background: #c5c6c9;
}

.scroll svg {
  width: 10px;
  height: 12px;
}

/* object snaps */
.osnap {
  display: flex;
  gap: 4px;
  height: 15px;
  padding-left: 6px;
  align-items: center;
  color: #444;
}

.osnap label {
  display: flex;
  align-items: center;
  gap: 2px;
}

.osnap .light input {
  border-color: #ddd;
}

.osnap .last {
  margin-left: 24px;
}

/* status bar */
.status {
  display: grid;
  grid-template-columns: 41px 54px 53px 54px 52px 104px 64px 47px 47px 31px 62px 48px 58px 36px 1fr;
  height: 11px;
  border-top: 1px solid #d5d9e2;
}

.status > * {
  border-right: 1px solid #d5d9e2;
  text-align: center;
  line-height: 10px;
}

.status .layer {
  text-align: left;
}

.layer i {
  display: inline-block;
  width: 8px;
  height: 8px;
  margin: 0 1px 0 2px;
  background: #111;
  vertical-align: middle;
}

.status .on {
  background: #d3dcf1;
  border-color: #d3dcf1;
  color: #222;
  font-weight: bold;
}

.status > :last-child {
  border-right: none;
}
```
